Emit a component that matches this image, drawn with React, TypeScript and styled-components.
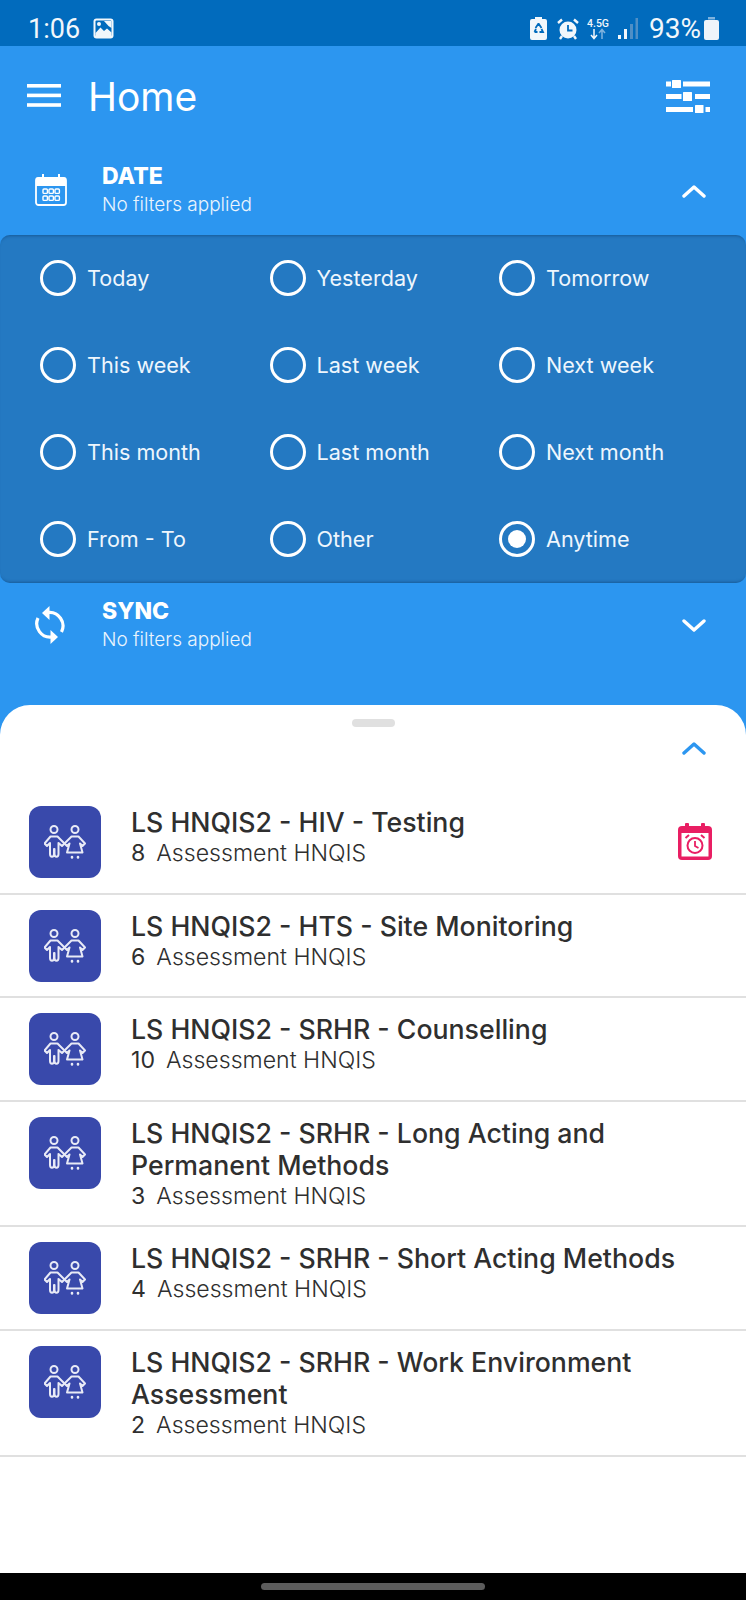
import styled, { createGlobalStyle } from 'styled-components';

const GlobalStyle = createGlobalStyle`
  html, body { margin: 0; padding: 0; background: #000; }
  * { box-sizing: border-box; }
`;

const Screen = styled.div`
  width: 746px;
  height: 1600px;
  display: flex;
  flex-direction: column;
  background: #2c96f0;
  font-family: Inter, "Noto Sans", sans-serif;
  overflow: hidden;
`;

const StatusBar = styled.div`
  height: 46px;
  flex-shrink: 0;
  background: #016bbd;
  color: #f2f7fb;
  display: flex;
  align-items: center;
  padding: 11px 27px 0 28px;
`;

const StatusTime = styled.span`
  font-family: Roboto, sans-serif;
  font-size: 27px;
  font-weight: 400;
  margin-right: 13px;
`;

const StatusRight = styled.div`
  margin-left: auto;
  display: flex;
  align-items: center;
  gap: 8px;
`;

const StatusPct = styled.span`
  font-family: Roboto, sans-serif;
  font-size: 28px;
  margin-left: 3px;
  margin-right: -5px;
`;

const AppBar = styled.div`
  height: 96px;
  flex-shrink: 0;
  display: flex;
  align-items: center;
  padding: 4px 36px 0 27px;
  color: #fff;
`;

const PageTitle = styled.h1`
  margin: 0 0 0 27px;
  font-size: 39px;
  font-weight: 400;
  line-height: 1;
`;

const AppBarAction = styled.div`
  margin-left: auto;
  display: flex;
`;

const FilterHeader = styled.div<{ $height: number; $top: number }>`
  height: ${({ $height }) => $height}px;
  flex-shrink: 0;
  padding: ${({ $top }) => $top}px 40px 0 35px;
  color: #fff;
`;

const FilterRow = styled.div`
  height: 57px;
  display: flex;
  align-items: center;
`;

const FilterIcon = styled.div`
  width: 67px;
  display: flex;
  flex-shrink: 0;
`;

const FilterText = styled.div`
  display: flex;
  flex-direction: column;
`;

const FilterName = styled.span`
  font-size: 23px;
  font-weight: 800;
  line-height: 30px;
`;

const FilterSub = styled.span`
  font-size: 19px;
  font-weight: 300;
  line-height: 27px;
  color: #eaf4fd;
`;

const Chevron = styled.div`
  margin: 3px 0 0 auto;
  display: flex;
`;

const DatePanel = styled.div`
  height: 348px;
  flex-shrink: 0;
  background: #2479c2;
  border-radius: 10px;
  box-shadow: inset 0 3px 3px -2px rgba(15, 70, 125, 0.6), inset 0 -4px 3px -3px rgba(15, 70, 125, 0.6);
  display: grid;
  grid-template-columns: repeat(3, 229.5px);
  grid-auto-rows: 87px;
  padding: 0 0 2px 40px;
  align-content: center;
`;

const RadioOption = styled.label`
  display: flex;
  align-items: center;
  gap: 11px;
  color: #eef6fd;
  font-size: 21.6px;
  font-weight: 400;
`;

const RadioCircle = styled.span<{ $checked?: boolean }>`
  width: 36px;
  height: 36px;
  flex-shrink: 0;
  border: 3.5px solid #fff;
  border-radius: 50%;
  display: flex;
  align-items: center;
  justify-content: center;

  &::after {
    content: '';
    display: ${({ $checked }) => ($checked ? 'block' : 'none')};
    width: 18px;
    height: 18px;
    border-radius: 50%;
    background: #fff;
  }
`;

const Sheet = styled.div`
  flex: 1;
  background: #fff;
  border-radius: 30px 30px 0 0;
  display: flex;
  flex-direction: column;
  align-items: stretch;
`;

const Handle = styled.div`
  width: 43px;
  height: 8px;
  margin: 14px auto 0;
  background: #e0e0e0;
  border-radius: 4px;
`;

const SheetToggle = styled.div`
  display: flex;
  justify-content: flex-end;
  padding: 14px 40px 0 0;
  height: 64px;
`;

const Row = styled.div`
  display: flex;
  align-items: flex-start;
  padding: 15px 34px 14.6px 29px;
  border-bottom: 2px solid #e0e0e0;
`;

const Tile = styled.div`
  width: 72px;
  height: 72px;
  flex-shrink: 0;
  background: #3949ab;
  border-radius: 12px;
  display: flex;
  align-items: center;
  justify-content: center;
`;

const RowText = styled.div`
  flex: 1;
  margin-left: 30px;
  color: #2f2f2f;
`;

const RowTitle = styled.div`
  font-size: 26.7px;
  font-weight: 500;
  line-height: 32px;
`;

const RowSub = styled.div`
  font-size: 23.1px;
  font-weight: 300;
  line-height: 30px;
  display: flex;
  gap: 11px;
`;

const RowCount = styled.span`
  font-weight: 400;
`;

const RowAction = styled.div`
  display: flex;
  align-self: center;
  margin-bottom: 2px;
`;

const SheetFill = styled.div`
  flex: 1;
`;

const NavBar = styled.div`
  height: 27px;
  flex-shrink: 0;
  background: #000;
  display: flex;
  justify-content: center;
  padding-top: 10px;
`;

const NavPill = styled.div`
  width: 224px;
  height: 7px;
  background: #5c5c5c;
  border-radius: 4px;
`;

const ImageGlyph = () => (
  <svg width="21" height="21" viewBox="0 0 21 21">
    <rect x="0.5" y="0.5" width="20" height="20" rx="3" fill="#f2f7fb" />
    <rect x="2.5" y="2.5" width="16" height="15.5" rx="1" fill="#016bbd" />
    <path d="M2.5 15l5-5.5 3.5 3.5 3-2.5 4.5 4v3.5h-16z" fill="#f2f7fb" />
    <circle cx="6" cy="6" r="2" fill="#f2f7fb" />
    <path d="M11 3h7.5v7l-3-2z" fill="#f2f7fb" />
  </svg>
);

const RecycleBattery = () => (
  <svg width="19" height="23" viewBox="0 0 19 23">
    <path d="M5 0h7v2h3a2 2 0 0 1 2 2v17a2 2 0 0 1-2 2H2a2 2 0 0 1-2-2V4a2 2 0 0 1 2-2h3z" fill="#f2f7fb" />
    <path d="M8.5 6.5l3 4.5M8.5 6.5l-3 4.5M4.5 15h3M9.5 15h3.5l-1.5-3M4.5 15l1.5-3" stroke="#016bbd" strokeWidth="1.8" fill="none" />
  </svg>
);

const AlarmGlyph = () => (
  <svg width="22" height="22" viewBox="0 0 22 22">
    <circle cx="11" cy="12" r="8.5" fill="#f2f7fb" />
    <path d="M11 7v5.5h4.5" stroke="#016bbd" strokeWidth="1.8" fill="none" />
    <path d="M1 5l4-3.5M21 5l-4-3.5" stroke="#f2f7fb" strokeWidth="2.4" />
    <path d="M5 18l-2 3M17 18l2 3" stroke="#f2f7fb" strokeWidth="2.4" />
  </svg>
);

const NetworkGlyph = () => (
  <svg width="23" height="23" viewBox="0 0 23 23">
    <text x="0" y="10" fontFamily="Roboto, sans-serif" fontSize="10.5" fontWeight="500" fill="#f2f7fb">4.5G</text>
    <path d="M7 12v9M4 18l3 3.5 3-3.5" stroke="#f2f7fb" strokeWidth="1.5" fill="none" />
    <path d="M15 22v-9M12 16l3-3.5 3 3.5" stroke="#7fb3de" strokeWidth="1.5" fill="none" />
  </svg>
);

const SignalGlyph = () => (
  <svg width="20" height="21" viewBox="0 0 20 21">
    <rect x="0" y="17" width="3" height="4" fill="#f2f7fb" />
    <rect x="6" y="11" width="3" height="10" fill="#f2f7fb" />
    <rect x="12" y="6" width="3" height="15" fill="#4f8fc6" />
    <rect x="17.5" y="0" width="2.5" height="21" fill="#4f8fc6" />
  </svg>
);

const BatteryGlyph = () => (
  <svg width="15" height="23" viewBox="0 0 15 23">
    <path d="M4 0h7v2.5H4z" fill="#7fb3de" />
    <rect x="0" y="3" width="15" height="20" rx="2" fill="#eef4fa" />
  </svg>
);

const MenuGlyph = () => (
  <svg width="34" height="24" viewBox="0 0 34 24" fill="#fff">
    <rect y="0" width="34" height="3.6" />
    <rect y="9.6" width="34" height="3.6" />
    <rect y="19.2" width="34" height="3.6" />
  </svg>
);

const SlidersGlyph = () => (
  <svg width="44" height="34" viewBox="0 0 44 34" fill="#fff">
    <rect x="0" y="2.5" width="5" height="5" />
    <rect x="6" y="1" width="9" height="8" rx="0.5" />
    <rect x="17" y="2.5" width="27" height="5" />
    <rect x="0" y="15" width="15.5" height="5" />
    <rect x="17" y="13" width="9" height="9" rx="0.5" />
    <rect x="29" y="15" width="15" height="5" />
    <rect x="0" y="28" width="27" height="5" />
    <rect x="29" y="26" width="8.5" height="8" rx="0.5" />
    <rect x="39.500" y="28" width="4.500" height="5" />
  </svg>
);

const CalendarGlyph = () => (
  <svg width="32" height="33" viewBox="0 0 32 33">
    <path d="M8 1v5M24 1v5" stroke="#fff" strokeWidth="2" />
    <path d="M2.5 4.5h27a1.5 1.5 0 0 1 1.5 1.5v7H1V6a1.5 1.5 0 0 1 1.5-1.5z" fill="#fff" />
    <rect x="1" y="5" width="30" height="27" rx="2.5" fill="none" stroke="#fff" strokeWidth="1.8" />
    {[10, 16, 22].map((x) =>
      [18, 25].map((y) => (
        <rect key={`${x}-${y}`} x={x - 2} y={y - 2} width="4.4" height="4.4" rx="1" fill="none" stroke="#fff" strokeWidth="1.4" />
      ))
    )}
  </svg>
);

const SyncGlyph = () => (
  <svg width="30" height="38" viewBox="0 0 30 38" fill="none" stroke="#fff" strokeWidth="3.2">
    <path d="M13 6.5A13.5 13.5 0 0 1 26.5 26" />
    <path d="M17 31A13.5 13.5 0 0 1 3 12" />
    <path d="M14.5 0v14l-7.500-7z" fill="#fff" strokeWidth="0" />
    <path d="M15.5 24v14l7.500-7z" fill="#fff" strokeWidth="0" />
  </svg>
);

const ChevronGlyph = ({ up, color = '#fff' }: { up?: boolean; color?: string }) => (
  <svg width="24" height="14" viewBox="0 0 24 14" fill="none" stroke={color} strokeWidth="3.4" strokeLinecap="round" strokeLinejoin="round">
    <path d={up ? 'M2 12L12 3l10 9' : 'M2 2l10 9 10-9'} />
  </svg>
);

const KidsGlyph = () => (
  <svg width="42" height="34" viewBox="0 0 42 34" fill="none" stroke="#e8eaf6" strokeWidth="2" strokeLinejoin="round" strokeLinecap="round">
    <circle cx="10" cy="4.5" r="3.5" />
    <circle cx="31" cy="4.5" r="3.500" />
    <path d="M6.500 11.500h7l7 7-2.500 2.500-3.500-3v11c0 3.500-4 3.500-4 0v-5h-.5v5c0 3.500-4 3.500-4 0v-11l-3 3L.5 18.500z" />
    <path d="M27.500 11.500h7l6.500 7-2.500 2.500-2.500-2.500 2.500 9H23l2.500-9-2.500 2.500-2.500-2.500z" />
    <path d="M28 32v.5M34 32v.5" strokeWidth="2.6" />
  </svg>
);

const ReminderGlyph = () => (
  <svg width="34" height="37" viewBox="0 0 34 37">
    <rect x="7" y="0" width="4" height="6" rx="1" fill="#e91e63" />
    <rect x="23" y="0" width="4" height="6" rx="1" fill="#e91e63" />
    <rect x="0" y="3" width="34" height="34" rx="4" fill="#e91e63" />
    <rect x="3.5" y="10" width="27" height="23.5" fill="#fff" />
    <circle cx="17" cy="22.5" r="7.5" fill="none" stroke="#e91e63" strokeWidth="2" />
    <path d="M17 18v5l3.5 2" fill="none" stroke="#e91e63" strokeWidth="1.8" />
    <path d="M7.5 15l3.5-3M26.5 15L23 12" stroke="#e91e63" strokeWidth="2" />
  </svg>
);

const dateOptions = [
  'Today', 'Yesterday', 'Tomorrow',
  'This week', 'Last week', 'Next week',
  'This month', 'Last month', 'Next month',
  'From - To', 'Other', 'Anytime',
];

const programs = [
  { title: 'LS HNQIS2 - HIV - Testing', count: 8, scheduled: true },
  { title: 'LS HNQIS2 - HTS - Site Monitoring', count: 6 },
  { title: 'LS HNQIS2 - SRHR - Counselling', count: 10 },
  { title: 'LS HNQIS2 - SRHR - Long Acting and Permanent Methods', count: 3 },
  { title: 'LS HNQIS2 - SRHR - Short Acting Methods', count: 4 },
  { title: 'LS HNQIS2 - SRHR - Work Environment Assessment', count: 2 },
];

export default function App() {
  return (
    <Screen>
      <GlobalStyle />
      <StatusBar>
        <StatusTime>1:06</StatusTime>
        <ImageGlyph />
        <StatusRight>
          <RecycleBattery />
          <AlarmGlyph />
          <NetworkGlyph />
          <SignalGlyph />
          <StatusPct>93%</StatusPct>
          <BatteryGlyph />
        </StatusRight>
      </StatusBar>

      <AppBar>
        <MenuGlyph />
        <PageTitle>Home</PageTitle>
        <AppBarAction><SlidersGlyph /></AppBarAction>
      </AppBar>

      <FilterHeader $height={93} $top={19}>
        <FilterRow>
          <FilterIcon><CalendarGlyph /></FilterIcon>
          <FilterText>
            <FilterName>DATE</FilterName>
            <FilterSub>No filters applied</FilterSub>
          </FilterText>
          <Chevron><ChevronGlyph up /></Chevron>
        </FilterRow>
      </FilterHeader>

      <DatePanel>
        {dateOptions.map((label) => (
          <RadioOption key={label}>
            <RadioCircle $checked={label === 'Anytime'} />
            {label}
          </RadioOption>
        ))}
      </DatePanel>

      <FilterHeader $height={122} $top={13}>
        <FilterRow>
          <FilterIcon><SyncGlyph /></FilterIcon>
          <FilterText>
            <FilterName>SYNC</FilterName>
            <FilterSub>No filters applied</FilterSub>
          </FilterText>
          <Chevron><ChevronGlyph /></Chevron>
        </FilterRow>
      </FilterHeader>

      <Sheet>
        <Handle />
        <SheetToggle><ChevronGlyph up color="#2c96f0" /></SheetToggle>
        {programs.map((p) => (
          <Row key={p.title}>
            <Tile><KidsGlyph /></Tile>
            <RowText>
              <RowTitle>{p.title}</RowTitle>
              <RowSub>
                <RowCount>{p.count}</RowCount>
                <span>Assessment HNQIS</span>
              </RowSub>
            </RowText>
            {p.scheduled && <RowAction><ReminderGlyph /></RowAction>}
          </Row>
        ))}
        <SheetFill />
      </Sheet>

      <NavBar><NavPill /></NavBar>
    </Screen>
  );
}
